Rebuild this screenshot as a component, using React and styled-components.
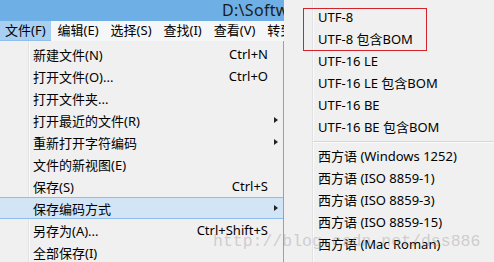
import React from "react";
import styled, { createGlobalStyle } from "styled-components";

const GlobalStyle = createGlobalStyle`
  html, body { margin: 0; padding: 0; background: #f0f0f0; }
  body { font-family: "Noto Sans", "Noto Sans CJK SC", sans-serif; font-size: 13px; color: #000; }
`;

const Screen = styled.div`
  position: relative;
  display: grid;
  grid-template-columns: 284px 1fr;
  width: 494px;
  height: 262px;
  overflow: hidden;
  background: #f0f0f0;
`;

const LeftCol = styled.div`
  display: flex;
  flex-direction: column;
  min-width: 0;
`;

const TitleBar = styled.div`
  height: 21px;
  background: #6eafe5;
  display: flex;
  align-items: center;
  padding-left: 3px;
  overflow: hidden;
`;

const Title = styled.span`
  margin-left: 219px;
  font-size: 16px;
  letter-spacing: 0.3px;
  color: #1b1b1b;
  white-space: nowrap;
  line-height: 21px;
`;

const MenuBar = styled.div`
  height: 20px;
  background: #f5f6f7;
  display: flex;
  gap: 2px;
  white-space: nowrap;
  overflow: hidden;
`;

const MenuBarItem = styled.div`
  padding: 0 5px;
  line-height: 19px;
  background: ${(p) => (p.$open ? "#a8cff2" : "transparent")};
  border-bottom: 1px solid ${(p) => (p.$open ? "#8cbfec" : "transparent")};
`;

const Dropdown = styled.div`
  flex: 1;
  padding-top: 2px;
  border-right: 1px solid #a0a0a0;
  background: linear-gradient(
    to right,
    transparent 28px,
    #e2e2e2 28px,
    #e2e2e2 29px,
    #fafafa 29px,
    #fafafa 30px,
    transparent 30px
  ),
  #f0f0f0;
`;

const Row = styled.div`
  display: grid;
  grid-template-columns: 1fr auto 15px;
  align-items: center;
  height: 22px;
  box-sizing: border-box;
  padding-left: 33px;
  white-space: nowrap;
  background: ${(p) => (p.$active ? "#d1e5f7" : "transparent")};
  border: 1px solid ${(p) => (p.$active ? "#8ebde9" : "transparent")};
  border-left: none;
  border-right: none;
`;

const Shortcut = styled.span`
  text-align: right;
`;

const ArrowCell = styled.span`
  display: flex;
  align-items: center;
  padding-left: 6px;
`;

const Arrow = styled.span`
  width: 0;
  height: 0;
  border-top: 3.5px solid transparent;
  border-bottom: 3.5px solid transparent;
  border-left: 4px solid #222;
`;

const Submenu = styled.div`
  padding-top: 6px;
  background: linear-gradient(
    to right,
    transparent 28px,
    #e2e2e2 28px,
    #e2e2e2 29px,
    #fafafa 29px,
    #fafafa 30px,
    transparent 30px
  ),
  #f0f0f0;
`;

const SubRow = styled.div`
  height: 22px;
  line-height: 22px;
  padding-left: 34px;
  white-space: nowrap;
`;

const Separator = styled.div`
  height: 7px;
  display: flex;
  align-items: center;
  padding-left: 29px;
  &::after {
    content: "";
    flex: 1;
    height: 1px;
    background: #d7d7d7;
    box-shadow: 0 1px 0 #fbfbfb;
  }
`;

const Highlight = styled.div`
  position: absolute;
  left: 303px;
  top: 8px;
  width: 122px;
  height: 41px;
  border: 1px solid #d2232a;
  pointer-events: none;
`;

const Watermark = styled.div`
  position: absolute;
  left: 213px;
  top: 232px;
  font-family: "Liberation Mono", monospace;
  font-size: 16.5px;
  color: rgba(150, 150, 150, 0.4);
  white-space: nowrap;
  pointer-events: none;
`;

const AppIcon = () => (
  <svg width="13" height="13" viewBox="0 0 13 13">
    <rect x="0.5" y="0.5" width="12" height="12" rx="1.5" fill="#4a4a4a" stroke="#2a2a2a" />
    <rect x="2" y="2" width="9" height="8" fill="#e8892c" />
    <text x="6.5" y="9" fontSize="8" textAnchor="middle" fill="#3a2a10" fontFamily="Liberation Sans, sans-serif" fontWeight="bold">S</text>
  </svg>
);

const menuBar = ["文件(F)", "编辑(E)", "选择(S)", "查找(I)", "查看(V)", "转到(G)"];

const fileMenu = [
  { label: "新建文件(N)", shortcut: "Ctrl+N" },
  { label: "打开文件(O)...", shortcut: "Ctrl+O" },
  { label: "打开文件夹..." },
  { label: "打开最近的文件(R)", sub: true },
  { label: "重新打开字符编码", sub: true },
  { label: "文件的新视图(E)" },
  { label: "保存(S)", shortcut: "Ctrl+S" },
  { label: "保存编码方式", sub: true, active: true },
  { label: "另存为(A)...", shortcut: "Ctrl+Shift+S" },
  { label: "全部保存(I)" },
];

const encodings = [
  "UTF-8",
  "UTF-8 包含BOM",
  "UTF-16 LE",
  "UTF-16 LE 包含BOM",
  "UTF-16 BE",
  "UTF-16 BE 包含BOM",
  "-",
  "西方语 (Windows 1252)",
  "西方语 (ISO 8859-1)",
  "西方语 (ISO 8859-3)",
  "西方语 (ISO 8859-15)",
  "西方语 (Mac Roman)",
  "DOS (CP 437)",
];

export default function App() {
  return (
    <>
      <GlobalStyle />
      <Screen>
        <LeftCol>
          <TitleBar>
            <AppIcon />
            <Title>D:\Software\Sublime Text 3</Title>
          </TitleBar>
          <MenuBar>
            {menuBar.map((m, i) => (
              <MenuBarItem key={m} $open={i === 0}>{m}</MenuBarItem>
            ))}
          </MenuBar>
          <Dropdown>
            {fileMenu.map((it) => (
              <Row key={it.label} $active={it.active}>
                <span>{it.label}</span>
                <Shortcut>{it.shortcut || ""}</Shortcut>
                <ArrowCell>{it.sub && <Arrow />}</ArrowCell>
              </Row>
            ))}
          </Dropdown>
        </LeftCol>
        <Submenu>
          {encodings.map((e, i) =>
            e === "-" ? <Separator key={i} /> : <SubRow key={i}>{e}</SubRow>
          )}
        </Submenu>
        <Highlight />
        <Watermark>http://blog.csdn.net/dss886</Watermark>
      </Screen>
    </>
  );
}
